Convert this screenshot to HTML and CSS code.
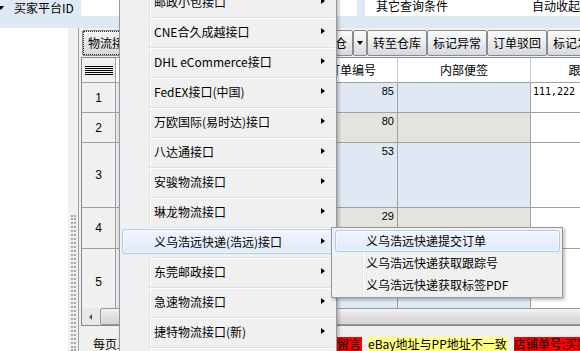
FILE: index.html
```html
<!DOCTYPE html>
<html>
<head>
	<meta charset="utf-8">
	<title>订单管理</title>
	<link rel="stylesheet" href="styles.css">
</head>
<body>
	<div class="top">
		<span class="combo-arrow"></span>
		<span class="top-label">买家平台ID</span>
		<span class="field f1"></span>
		<span class="field f2"></span>
		<span class="field f3"><span>其它查询条件</span><span>自动收起</span></span>
	</div>
	<div class="work">
		<div class="left"></div>
		<div class="splitter"><div class="grip"></div></div>
		<div class="main">
			<div class="toolbar">
				<span class="btn btn-focus"><span class="focus">物流接口</span></span>
				<span class="btn">打印面单</span>
				<span class="btn">批量编辑</span>
				<span class="btn btn-wide">分配发货仓</span>
				<span class="btn btn-arrow"><i></i></span>
				<span class="btn">转至仓库</span>
				<span class="btn">标记异常</span>
				<span class="btn">订单驳回</span>
				<span class="btn">标记发货</span>
			</div>
			<div class="grid">
				<div class="ghead">
					<span class="hc"><i class="lines"></i></span>
					<span class="hc">订单状态</span>
					<span class="hc">买家</span>
					<span class="hc">订单编号</span>
					<span class="hc">内部便签</span>
					<span class="hc">跟踪号</span>
				</div>
				<div class="gbody">
					<div class="row odd h30">
						<span class="rh">1</span><span class="c"></span><span class="c"></span>
						<span class="c num">85</span><span class="c"></span><span class="c last mono">111,222</span>
					</div>
					<div class="row even h30">
						<span class="rh">2</span><span class="c"></span><span class="c"></span>
						<span class="c num">80</span><span class="c"></span><span class="c last"></span>
					</div>
					<div class="row odd h65">
						<span class="rh">3</span><span class="c"></span><span class="c"></span>
						<span class="c num">53</span><span class="c"></span><span class="c last"></span>
					</div>
					<div class="row even h41">
						<span class="rh">4</span><span class="c"></span><span class="c"></span>
						<span class="c num">29</span><span class="c"></span><span class="c last"></span>
					</div>
					<div class="row odd h66">
						<span class="rh">5</span><span class="c"></span><span class="c"></span>
						<span class="c num">17</span><span class="c"></span><span class="c last"></span>
					</div>
				</div>
				<div class="hscroll">
					<span class="sb-left"><i></i></span>
					<span class="sb-thumb"></span>
				</div>
			</div>
			<div class="status">
				<span class="pager">每页显示 100 条</span>
				<span class="tag red">留言</span>
				<span class="tag yellow">eBay地址与PP地址不一致</span>
				<span class="tag red">店铺单号:买家平台ID</span>
			</div>
		</div>
	</div>

	<div class="menu">
		<div class="mi">邮政小包接口</div><div class="msep"></div>
		<div class="mi">CNE合久成越接口</div><div class="msep"></div>
		<div class="mi">DHL eCommerce接口</div><div class="msep"></div>
		<div class="mi">FedEX接口(中国)</div><div class="msep"></div>
		<div class="mi">万欧国际(易时达)接口</div><div class="msep"></div>
		<div class="mi">八达通接口</div><div class="msep"></div>
		<div class="mi">安骏物流接口</div><div class="msep"></div>
		<div class="mi">琳龙物流接口</div><div class="msep"></div>
		<div class="mi hot">义乌浩远快递(浩远)接口</div><div class="msep"></div>
		<div class="mi">东莞邮政接口</div><div class="msep"></div>
		<div class="mi">急速物流接口</div><div class="msep"></div>
		<div class="mi">捷特物流接口(新)</div><div class="msep"></div>
		<div class="mi">燕文物流接口</div>
	</div>
	<div class="sub">
		<div class="si hot">义乌浩远快递提交订单</div>
		<div class="si">义乌浩远快递获取跟踪号</div>
		<div class="si">义乌浩远快递获取标签PDF</div>
	</div>
</body>
</html>
```
FILE: styles.css
```css
html{overflow:hidden;}
body{margin:0;width:580px;height:351px;overflow:hidden;position:relative;background:#f0f0f0;color:#000;font:12px "Noto Sans CJK SC", sans-serif;}

/* search strip */
.top{display:flex;align-items:flex-start;height:28px;background:#dfe8f5;}
.combo-arrow{flex:none;width:0;height:0;margin:6px 0 0 -2px;border-left:3px solid transparent;border-right:3px solid transparent;border-top:4px solid #000;}
.top-label{flex:none;width:67px;margin-left:10px;line-height:16px;}
.field{flex:none;height:16px;background:#fff;}
.f1{width:39px;}
.f2{width:27px;margin-left:210px;}
.f3{flex:1;margin-left:8px;padding-left:11px;display:flex;justify-content:space-between;line-height:12px;}

/* work area */
.work{display:flex;height:323px;overflow:hidden;}
.left{flex:none;width:68px;background:#fff;}
.splitter{flex:none;width:10px;display:flex;flex-direction:column;}
.grip{flex:none;width:1px;height:136px;margin:187px 0 0 3px;border-left:2px dotted #a4a4a4;border-right:2px dotted #a4a4a4;}
.main{flex:1 1 0;min-width:0;overflow:hidden;display:flex;flex-direction:column;border-left:1px solid #a0a0a0;}

/* toolbar */
.toolbar{flex:none;height:29px;box-sizing:border-box;padding:2px 0 0 3px;display:flex;}
.btn{flex:none;height:26px;box-sizing:border-box;padding:0 5px;border:1px solid #8a8a8a;border-radius:2px;background:linear-gradient(#fbfbfb, #eceef0 45%, #d5d8dd);line-height:24px;white-space:nowrap;}
.btn-focus{padding:0;background:linear-gradient(#f6f6f6, #e4e4e4 50%, #d9d9d9);}
.focus{display:inline-block;height:24px;box-sizing:border-box;padding:0 4px;border:1px dotted #333;line-height:22px;}
.btn-wide{width:91px;text-align:right;}
.btn-arrow{width:14px;padding:0;display:flex;align-items:center;justify-content:center;}
.btn-arrow i{width:0;height:0;border-left:3.5px solid transparent;border-right:3.5px solid transparent;border-top:4px solid #000;}

/* grid */
.grid{flex:none;width:620px;margin-left:2px;border:1px solid #7f8a99;border-right:none;display:flex;flex-direction:column;}
.ghead, .row{display:grid;grid-template-columns:34px 101px 90px 91px 133px 112px;}
.ghead{height:25px;background:#fff;}
.hc{box-sizing:border-box;border-right:1px solid #c8c8c8;border-bottom:1px solid #a0a0a0;text-align:center;line-height:24px;white-space:nowrap;overflow:hidden;}
.hc:first-child{border-right-color:#a0a0a0;background:#f0f0f0;display:flex;align-items:center;justify-content:center;}
.lines{width:28px;height:9px;background:repeating-linear-gradient(#000 0 1px, transparent 1px 2px);}
.gbody{height:225px;overflow:hidden;}
.h30{height:30px;}
.h65{height:65px;}
.h41{height:41px;}
.h66{height:66px;}
.rh, .c{box-sizing:border-box;border-right:1px solid #a0a0a0;border-bottom:1px solid #a0a0a0;}
.rh{background:#f0f0f0;display:flex;align-items:center;justify-content:center;font-family:"Liberation Sans", sans-serif;}
.odd .c{background:#dfe8f3;}
.even .c{background:#e4e4de;}
.row .last{background:#fff;}
.num{text-align:right;padding:1px 3px 0 0;font:11px/14px "Liberation Sans", sans-serif;}
.mono{padding:2px 0 0 2px;font:10px/14px "DejaVu Sans Mono", monospace;}
.hscroll{height:17px;display:flex;background:#e8e8e8;}
.sb-left{width:17px;display:flex;align-items:center;justify-content:center;}
.sb-left i{width:0;height:0;border-top:3px solid transparent;border-bottom:3px solid transparent;border-right:3px solid #555;}
.sb-thumb{flex:1;margin-left:1px;border:1px solid #9a9a9a;border-radius:2px;background:linear-gradient(#f2f2f2, #e0e0e0 50%, #d6d6d6);}

/* status line */
.status{flex:1;display:flex;padding:11px 0 0 14px;line-height:14px;white-space:nowrap;}
.pager{width:244px;flex:none;}
.tag{flex:none;padding:0 1px 0 0;}
.tag + .tag{margin-left:6px;}
.red{background:#ff0000;}
.yellow{background:#ffff80;}

/* popup menus */
.menu, .sub{position:absolute;box-sizing:border-box;border:1px solid #979797;background-color:#f0f0f0;box-shadow:2px 2px 3px rgba(0,0,0,0.25);}
.menu{left:119px;top:-14px;width:218px;padding:2px 3px 2px 2px;background-image:linear-gradient(to right, transparent 29px, #e2e3e3 29px 30px, #fff 30px 31px, transparent 31px);}
.sub{left:331px;top:227px;width:232px;padding:2px 2px 1px 3px;z-index:2;background-image:linear-gradient(to right, transparent 30px, #e2e3e3 30px 31px, #fff 31px 32px, transparent 32px);}
.mi{position:relative;height:25px;margin-bottom:3px;padding-left:31px;box-sizing:border-box;border:1px solid transparent;border-radius:3px;line-height:23px;white-space:nowrap;}
.mi::after{content:"";position:absolute;right:7px;top:8px;border-left:4px solid #000;border-top:3.5px solid transparent;border-bottom:3.5px solid transparent;}
.msep{height:0;margin:0 -2px 0 27px;border-top:1px solid #e0e0e0;border-bottom:1px solid #fff;}
.si{height:22px;padding-left:30px;box-sizing:border-box;border:1px solid transparent;border-radius:3px;line-height:20px;white-space:nowrap;}
.hot{border-color:#aecbf0;background:linear-gradient(#f0f5fd, #e0eaf9);box-shadow:inset 0 0 0 1px rgba(255,255,255,0.55);}
```
